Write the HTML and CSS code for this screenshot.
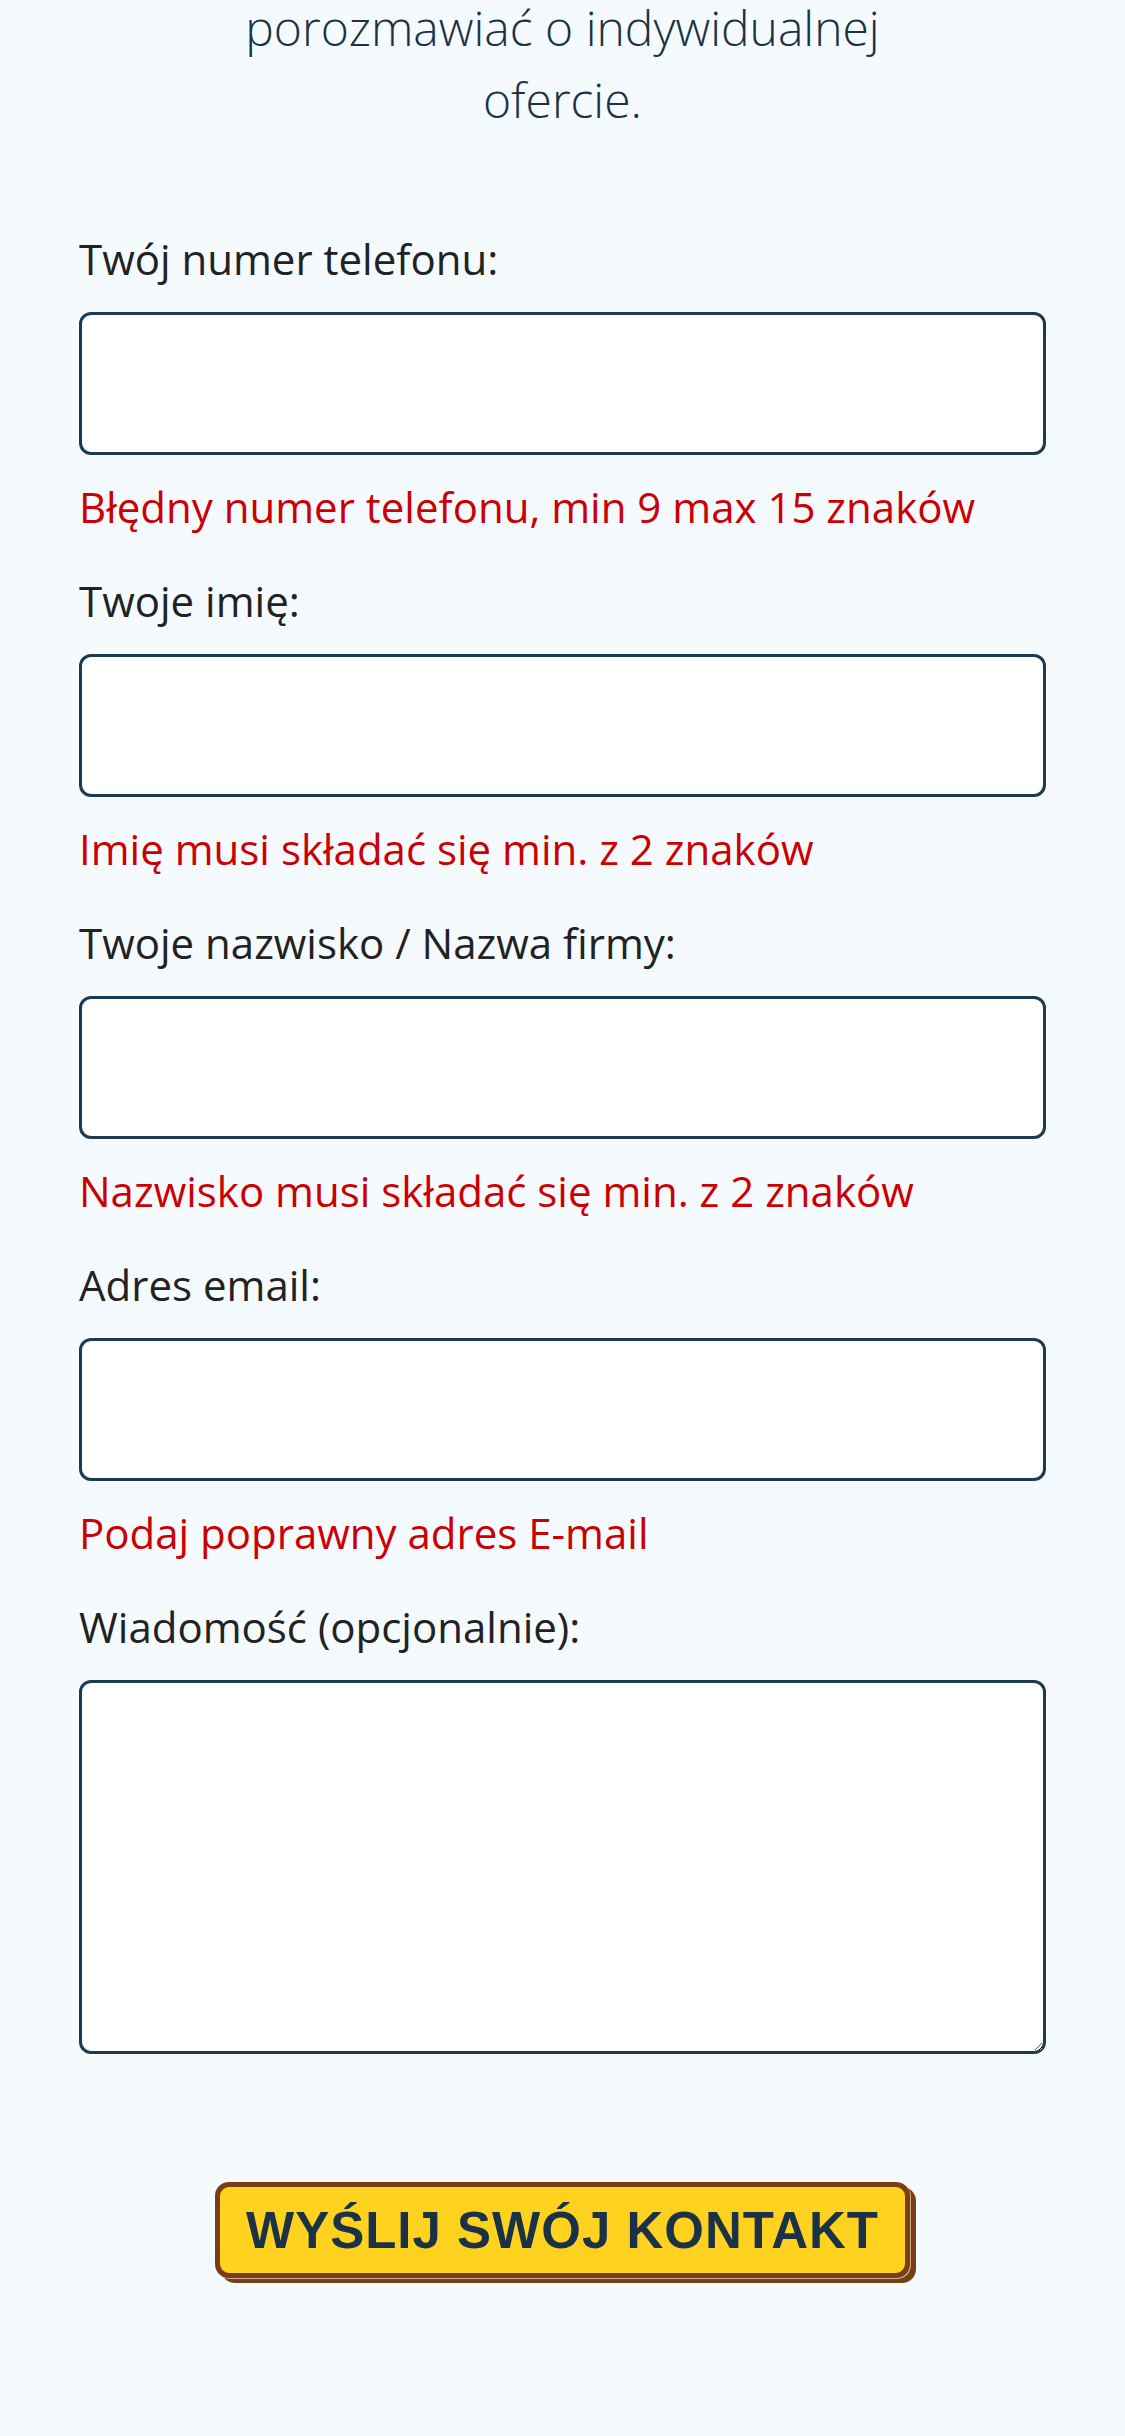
FILE: index.html
```html
<!DOCTYPE html>
<html lang="pl">
<head>
<meta charset="utf-8">
<title>Formularz kontaktowy</title>
<link rel="stylesheet" href="styles.css">
</head>
<body>
<main class="page">
  <p class="intro">porozmawiać o indywidualnej ofercie.</p>
  <form class="form">
    <div class="field">
      <label class="label" for="phone">Twój numer telefonu:</label>
      <input class="input" id="phone" type="tel">
      <p class="error">Błędny numer telefonu, min 9 max 15 znaków</p>
    </div>
    <div class="field">
      <label class="label" for="name">Twoje imię:</label>
      <input class="input" id="name" type="text">
      <p class="error">Imię musi składać się min. z 2 znaków</p>
    </div>
    <div class="field">
      <label class="label" for="surname">Twoje nazwisko / Nazwa firmy:</label>
      <input class="input" id="surname" type="text">
      <p class="error">Nazwisko musi składać się min. z 2 znaków</p>
    </div>
    <div class="field">
      <label class="label" for="email">Adres email:</label>
      <input class="input" id="email" type="email">
      <p class="error">Podaj poprawny adres E-mail</p>
    </div>
    <div class="field">
      <label class="label" for="msg">Wiadomość (opcjonalnie):</label>
      <textarea class="input textarea" id="msg"></textarea>
    </div>
    <div class="actions">
      <button class="submit" type="button">WYŚLIJ SWÓJ KONTAKT</button>
    </div>
  </form>
</main>
</body>
</html>
```

FILE: styles.css
```css
html, body {
  margin: 0;
  padding: 0;
  background: #f5faff;
}

body {
  font-family: "Open Sans", "Noto Sans", sans-serif;
  color: #222222;
}

.page {
  padding: 0 79px;
  height: 2436px;
  box-sizing: border-box;
  overflow: hidden;
}

.intro {
  margin: -8px auto 0;
  max-width: 720px;
  text-align: center;
  font-weight: 300;
  font-size: 48px;
  line-height: 72px;
  color: #1b3246;
}

.form {
  margin-top: 89px;
  display: flex;
  flex-direction: column;
}

.field {
  display: flex;
  flex-direction: column;
  margin-bottom: 26.5px;
}

.label {
  display: block;
  font-size: 42px;
  line-height: 67.5px;
  color: #222222;
}

.input {
  display: block;
  margin-top: 19.5px;
  width: 100%;
  height: 143px;
  box-sizing: border-box;
  border: 3px solid #1d3a50;
  border-radius: 12px;
  background: #ffffff;
  font-family: inherit;
  font-size: 42px;
  padding: 10px 20px;
  outline: none;
}

.textarea {
  height: 374px;
  resize: vertical;
}

.error {
  margin: 18px 0 0;
  font-size: 42px;
  line-height: 67.5px;
  color: #cc0000;
}

.actions {
  display: flex;
  justify-content: center;
  margin-top: 101.5px;
}

.submit {
  height: 96px;
  padding: 0 26px;
  box-sizing: border-box;
  border: 5px solid #7a3e16;
  border-radius: 14px;
  background: #ffd21f;
  color: #1b3246;
  font-family: "Liberation Sans", Arial, sans-serif;
  font-weight: 700;
  font-size: 51px;
  letter-spacing: 1px;
  line-height: 1;
  box-shadow: 1px 1px 0 #c9ae92, 6px 5px 0 #7a3e16;
  cursor: pointer;
}
```
